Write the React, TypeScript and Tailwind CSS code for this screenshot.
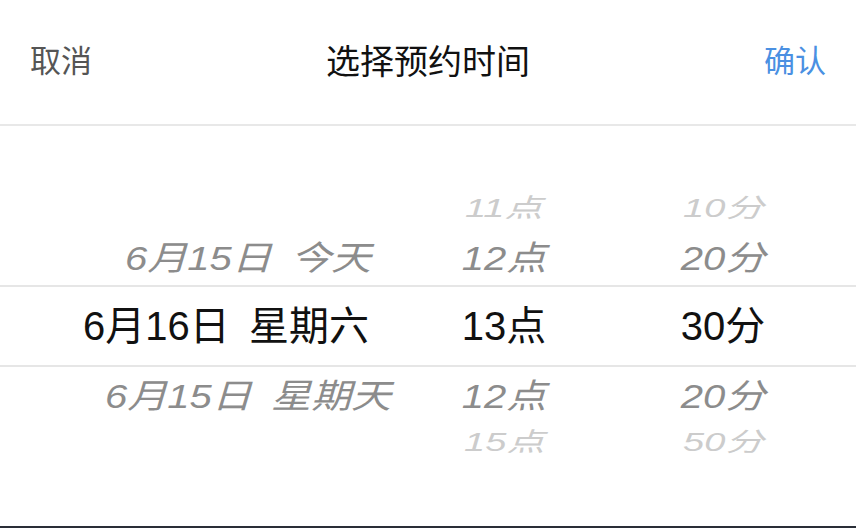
import React from 'react';

const font = { fontFamily: '"Liberation Sans", "Noto Sans CJK SC", sans-serif' };

type Row = { text: string; h: string; tone: 'sel' | 'near' | 'far'; squash?: string };

function Cell({ row }: { row: Row }) {
    const color =
        row.tone === 'sel' ? 'text-[#111111]' : row.tone === 'near' ? 'text-[#8c8c8c] italic' : 'text-[#cccccc] italic';
    return (
        <div className={`${row.h} flex items-center justify-center overflow-hidden`}>
            <span className={`whitespace-pre text-[40px] leading-none [word-spacing:8px] ${color} ${row.squash ?? ''}`}>
                {row.text}
            </span>
        </div>
    );
}

function Column({ rows, className }: { rows: Row[]; className: string }) {
    return (
        <div className={`flex flex-col ${className}`}>
            {rows.map((r, i) => (
                <Cell key={i} row={r} />
            ))}
        </div>
    );
}

export default function App() {
    const dates: Row[] = [
        { text: '', h: 'h-[44px]', tone: 'far' },
        { text: '6月15日 今天', h: 'h-[56px]', tone: 'near', squash: 'scale-y-[0.85] translate-x-[11px]' },
        { text: '6月16日 星期六', h: 'h-[80px]', tone: 'sel', squash: '-translate-x-[11px]' },
        { text: '6月15日 星期天', h: 'h-[60px]', tone: 'near', squash: 'scale-y-[0.85] translate-x-[11px]' },
    ];
    const hours: Row[] = [
        { text: '11点', h: 'h-[44px]', tone: 'far', squash: 'scale-y-[0.65] scale-x-[0.95]' },
        { text: '12点', h: 'h-[56px]', tone: 'near', squash: 'scale-y-[0.85]' },
        { text: '13点', h: 'h-[80px]', tone: 'sel' },
        { text: '12点', h: 'h-[60px]', tone: 'near', squash: 'scale-y-[0.85]' },
        { text: '15点', h: 'h-[32px]', tone: 'far', squash: 'scale-y-[0.65] scale-x-[0.95]' },
    ];
    const mins: Row[] = [
        { text: '10分', h: 'h-[44px]', tone: 'far', squash: 'scale-y-[0.65] scale-x-[0.95]' },
        { text: '20分', h: 'h-[56px]', tone: 'near', squash: 'scale-y-[0.85]' },
        { text: '30分', h: 'h-[80px]', tone: 'sel' },
        { text: '20分', h: 'h-[60px]', tone: 'near', squash: 'scale-y-[0.85]' },
        { text: '50分', h: 'h-[32px]', tone: 'far', squash: 'scale-y-[0.65] scale-x-[0.95]' },
    ];

    return (
        <div className="flex h-[528px] w-[856px] flex-col overflow-hidden bg-white" style={font}>
            <div className="flex h-[126px] shrink-0 items-center justify-between border-b-2 border-[#e8e8e8] px-[30px]">
                <span className="w-[100px] text-[31px] text-[#555555]">取消</span>
                <span className="text-[34px] text-[#111111]">选择预约时间</span>
                <span className="w-[100px] text-right text-[31px] text-[#4a90e2]">确认</span>
            </div>

            <div className="relative flex-1">
                <div className="pt-[60px]">
                    <div className="flex">
                        <Column rows={dates} className="ml-[37px] w-[400px]" />
                        <Column rows={hours} className="w-[134px]" />
                        <Column rows={mins} className="ml-[62px] w-[180px]" />
                    </div>
                </div>
                <div className="absolute top-[159px] right-0 left-0 h-[2px] bg-[#e6e6e6]" />
                <div className="absolute top-[239px] right-0 left-0 h-[2px] bg-[#e6e6e6]" />
            </div>

            <div className="h-[2px] shrink-0 bg-[#2a2e37]" />
        </div>
    );
}
